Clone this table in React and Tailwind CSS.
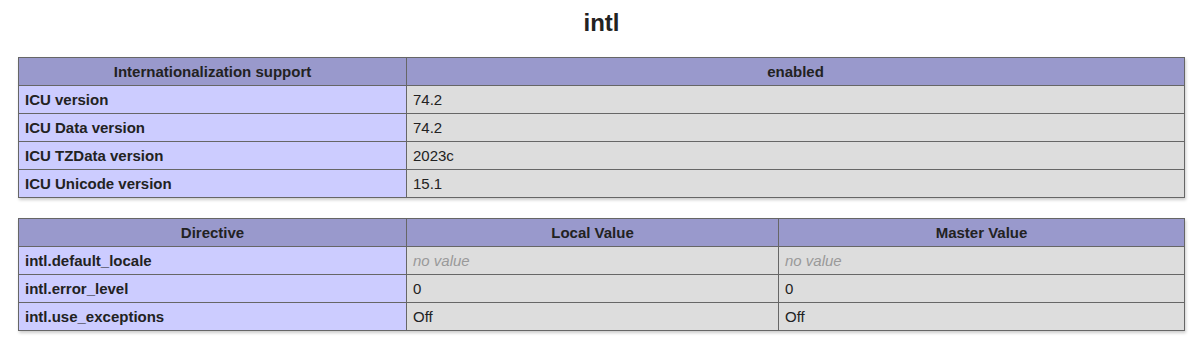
const support = [
  ["ICU version", "74.2"],
  ["ICU Data version", "74.2"],
  ["ICU TZData version", "2023c"],
  ["ICU Unicode version", "15.1"],
];

const directives = [
  ["intl.default_locale", null, null],
  ["intl.error_level", "0", "0"],
  ["intl.use_exceptions", "Off", "Off"],
];

function Value({ v }) {
  if (v === null) return <i className="text-[#999]">no value</i>;
  return v;
}

export default function App() {
  const th = "h-[28px] border border-[#666] bg-[#99c] px-[6px] pt-[2px] text-center font-bold";
  const e = "h-[28px] border border-[#666] bg-[#ccf] px-[6px] pt-[2px] text-left font-bold";
  const v = "h-[28px] border border-[#666] bg-[#ddd] px-[6px] pt-[2px] text-left";

  return (
    <div className="min-h-[349px] bg-white pt-[9px] font-['Liberation_Sans',Arial,sans-serif] text-[#222]">
      <div className="ml-[18px] w-[1167px]">
        <h2 className="text-center text-[24px] leading-[28px] font-bold">intl</h2>

        {/* tabla 1 — soporte */}
        <table className="mt-[20px] w-[1167px] table-fixed border-collapse text-[15px] shadow-[1px_2px_3px_#ccc]">
          <colgroup>
            <col className="w-[388px]" />
            <col />
          </colgroup>
          <thead>
            <tr>
              <th className={th}>Internationalization support</th>
              <th className={th}>enabled</th>
            </tr>
          </thead>
          <tbody>
            {support.map(([k, val]) => (
              <tr key={k}>
                <td className={e}>{k}</td>
                <td className={v}>{val}</td>
              </tr>
            ))}
          </tbody>
        </table>

        {/* tabla 2 — directivas */}
        <table className="mt-[20px] w-[1167px] table-fixed border-collapse text-[15px] shadow-[1px_2px_3px_#ccc]">
          <colgroup>
            <col className="w-[388px]" />
            <col className="w-[372px]" />
            <col />
          </colgroup>
          <thead>
            <tr>
              <th className={th}>Directive</th>
              <th className={th}>Local Value</th>
              <th className={th}>Master Value</th>
            </tr>
          </thead>
          <tbody>
            {directives.map(([k, local, master]) => (
              <tr key={k}>
                <td className={e}>{k}</td>
                <td className={v}><Value v={local} /></td>
                <td className={v}><Value v={master} /></td>
              </tr>
            ))}
          </tbody>
        </table>
      </div>
    </div>
  );
}
